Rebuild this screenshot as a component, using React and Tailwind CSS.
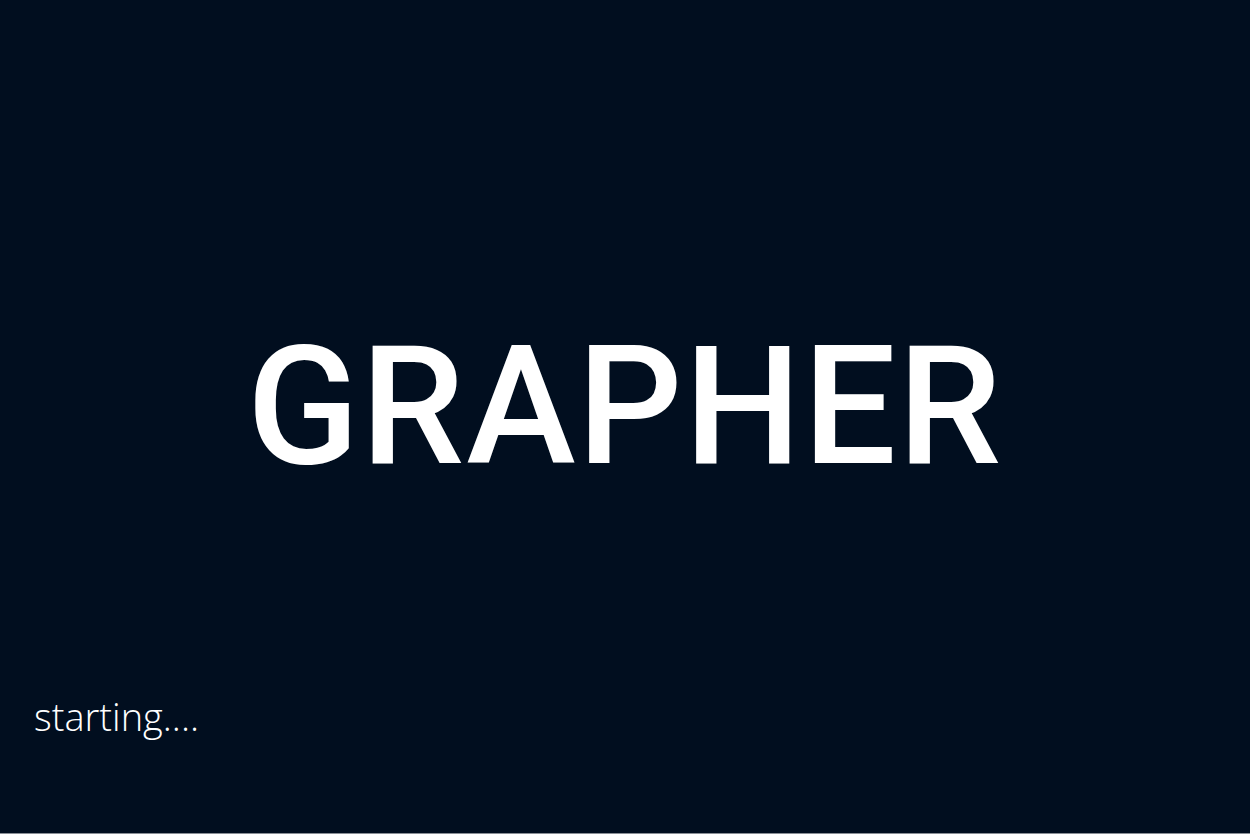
export default function App() {
  return (
    <div className="h-[834px] w-full bg-[#010e1f] flex flex-col border-b border-[#8a8f96] overflow-hidden">
      <div className="pt-[324px] flex justify-center">
        <h1 className="text-[165px] leading-none font-medium text-white tracking-[0.01em] font-['Roboto',sans-serif]">
          GRAPHER
        </h1>
      </div>
      <div className="mt-auto pb-[98px] pl-[34px]">
        <p className="text-[38px] leading-none font-light text-white font-['Open_Sans',sans-serif]">
          starting....
        </p>
      </div>
    </div>
  );
}
